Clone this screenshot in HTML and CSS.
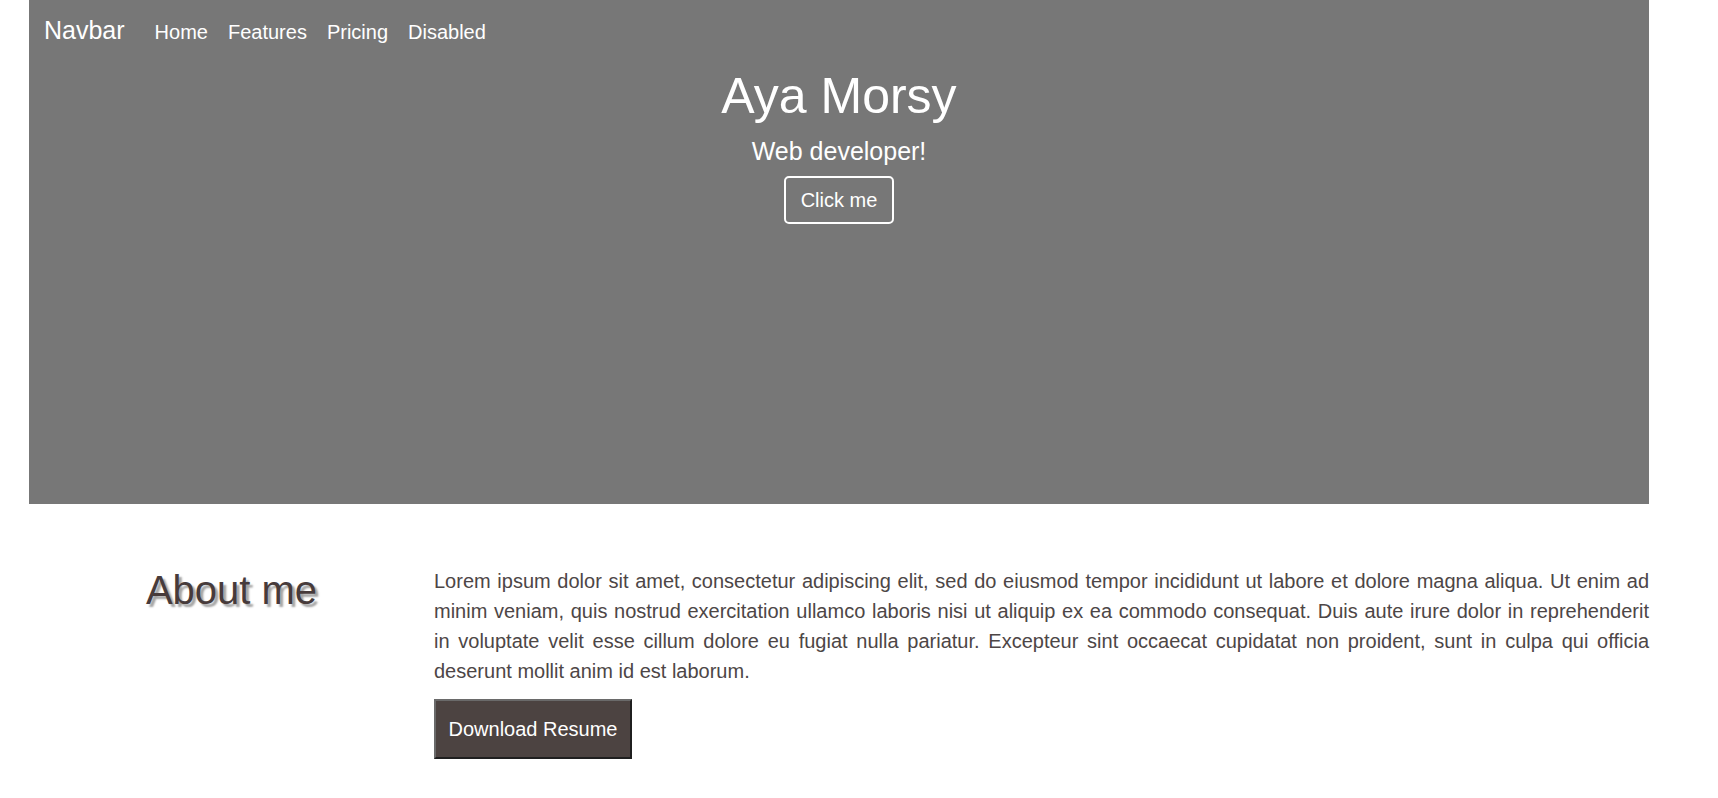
FILE: index.html
```html
<!DOCTYPE html>
<html lang="en">
<head>
<meta charset="utf-8">
<title>Aya Morsy</title>
<link rel="stylesheet" href="styles.css">
</head>
<body>
<div class="page">
  <header class="hero">
    <nav class="navbar">
      <a class="brand" href="#">Navbar</a>
      <ul class="nav-links">
        <li><a href="#">Home</a></li>
        <li><a href="#">Features</a></li>
        <li><a href="#">Pricing</a></li>
        <li><a href="#">Disabled</a></li>
      </ul>
    </nav>
    <div class="hero-content">
      <h1 class="hero-title">Aya Morsy</h1>
      <p class="hero-lead">Web developer!</p>
      <button class="btn-outline" type="button">Click me</button>
    </div>
  </header>
  <section class="about">
    <div class="about-title-col">
      <h2 class="about-title">About me</h2>
    </div>
    <div class="about-body">
      <p class="about-text">Lorem ipsum dolor sit amet, consectetur adipiscing elit, sed do eiusmod tempor incididunt ut labore et dolore magna aliqua. Ut enim ad minim veniam, quis nostrud exercitation ullamco laboris nisi ut aliquip ex ea commodo consequat. Duis aute irure dolor in reprehenderit in voluptate velit esse cillum dolore eu fugiat nulla pariatur. Excepteur sint occaecat cupidatat non proident, sunt in culpa qui officia deserunt mollit anim id est laborum.</p>
      <button class="btn-dark" type="button">Download Resume</button>
    </div>
  </section>
</div>
</body>
</html>
```
FILE: styles.css
```css
* {
  box-sizing: border-box;
}

html, body {
  margin: 0;
  padding: 0;
  background: #ffffff;
  overflow: hidden;
}

body {
  font-family: "Liberation Sans", Arial, sans-serif;
  font-size: 20px;
  line-height: 1.5;
  color: #4d4646;
}

.page {
  padding: 0 69px 0 29px;
}

.hero {
  background: #777777;
  height: 504px;
  color: #ffffff;
}

.navbar {
  display: flex;
  align-items: baseline;
  padding: 12px 15px 0;
}

.brand {
  font-size: 25px;
  line-height: 37.5px;
  color: #ffffff;
  text-decoration: none;
  margin-right: 20px;
}

.nav-links {
  display: flex;
  list-style: none;
  margin: 0;
  padding: 0;
}

.nav-links a {
  display: block;
  padding: 0 10px;
  font-size: 20px;
  line-height: 30px;
  color: #ffffff;
  text-decoration: none;
}

.hero-content {
  display: flex;
  flex-direction: column;
  align-items: center;
}

.hero-title {
  margin: 16px 0 0;
  font-size: 50px;
  line-height: 60px;
  font-weight: 400;
}

.hero-lead {
  margin: 7.5px 0 0;
  font-size: 25px;
  line-height: 37.5px;
}

.btn-outline {
  margin-top: 5.5px;
  font-family: inherit;
  font-size: 20px;
  line-height: 30px;
  color: #ffffff;
  background: transparent;
  border: 2px solid #ffffff;
  border-radius: 5px;
  padding: 7px 15px;
  height: 48px;
  white-space: nowrap;
}

.about {
  display: grid;
  grid-template-columns: 405px 1fr;
  padding-top: 62px;
}

.about-title-col {
  text-align: center;
}

.about-title {
  margin: 0;
  font-size: 40px;
  line-height: 48px;
  font-weight: 400;
  color: #473b3b;
  text-shadow: 3px 3px 2px #a3a3a3;
}

.about-text {
  margin: 0 0 13px;
  text-align: justify;
  color: #4d4646;
}

.btn-dark {
  font-family: inherit;
  font-size: 20px;
  line-height: 30px;
  color: #ffffff;
  background: #4c4341;
  border: 2px solid;
  border-color: #6a6a6a #1f1f1f #1f1f1f #6a6a6a;
  padding: 13px 12px;
  width: 198px;
  height: 60px;
  white-space: nowrap;
}
```
